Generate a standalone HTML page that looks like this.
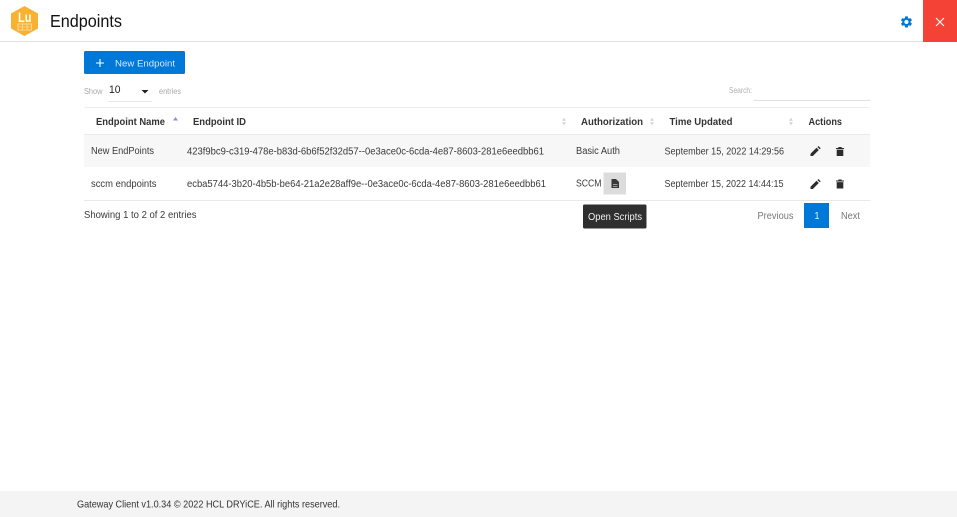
<!DOCTYPE html>
<html><head><meta charset="utf-8"><title>Endpoints</title>
<style>
html,body{margin:0;padding:0;background:#fff;width:957px;height:517px;overflow:hidden}
svg{display:block}
text{font-family:"Liberation Sans","DejaVu Sans",sans-serif;fill:#3a3a3a;font-size:10px}
.h{font-weight:bold;fill:#333}
</style></head><body>
<svg width="957" height="517" viewBox="0 0 957 517" xmlns="http://www.w3.org/2000/svg">
<rect width="957" height="517" fill="#fff"/>
<!-- header -->
<rect x="0" y="41" width="957" height="1" fill="#e2e2e2"/>
<polygon points="24.500,6 38,13.500 38,28.500 24.500,36 11,28.500 11,13.500" fill="#f8b133"/>
<text x="18" y="22" style="font-size:14px;font-weight:bold;fill:#fff" textLength="13.500" lengthAdjust="spacingAndGlyphs">Lu</text>
<rect x="18" y="24" width="13.500" height="6" fill="none" stroke="#fde3b0" stroke-width=".8"/>
<path d="M22.500 24v6M27 24v6M18 27h13.500" stroke="#fde3b0" stroke-width=".6" fill="none"/>
<text x="50" y="27" style="font-size:17.500px;fill:#111" textLength="72" lengthAdjust="spacingAndGlyphs">Endpoints</text>
<g transform="translate(899.500,15) scale(.58)"><path fill="#0078d7" d="M19.140 12.940c.04-.3.06-.61.06-.94 0-.32-.02-.64-.07-.94l2.030-1.580c.18-.14.23-.41.12-.61l-1.920-3.320c-.12-.22-.37-.29-.59-.22l-2.390.96c-.5-.38-1.030-.7-1.620-.94l-.36-2.540c-.04-.24-.24-.41-.48-.41h-3.840c-.24 0-.43.17-.47.41l-.36 2.540c-.59.24-1.130.57-1.620.94l-2.390-.96c-.22-.08-.47 0-.59.22L2.740 8.870c-.12.21-.08.47.12.61l2.030 1.580c-.05.3-.09.63-.09.94s.02.64.07.94l-2.030 1.580c-.18.14-.23.41-.12.61l1.920 3.320c.12.22.37.29.59.22l2.390-.96c.5.38 1.030.7 1.620.94l.36 2.540c.05.24.24.41.48.41h3.840c.24 0 .44-.17.47-.41l.36-2.540c.59-.24 1.130-.56 1.620-.94l2.390.96c.22.08.47 0 .59-.22l1.920-3.320c.12-.22.07-.47-.12-.61l-2.010-1.580zM12 15.600c-1.980 0-3.600-1.620-3.600-3.600s1.620-3.600 3.600-3.600 3.600 1.620 3.600 3.600-1.620 3.600-3.600 3.600z"/></g>
<rect x="923" y="0" width="34" height="42" fill="#f44336"/>
<path d="M936 18l8 8M944 18l-8 8" stroke="#fff" stroke-width="1.100" fill="none"/>
<!-- button -->
<rect x="84" y="51" width="101" height="23" rx="1.500" fill="#0078d7"/>
<path d="M100 59v8M96 63h8" stroke="#fff" stroke-width="1.100"/>
<text x="115" y="66.500" style="font-size:9.500px;fill:#d6eaff" textLength="60" lengthAdjust="spacingAndGlyphs">New Endpoint</text>
<!-- length -->
<text x="84" y="94" style="font-size:8px;fill:#a8a8a8" textLength="18.500" lengthAdjust="spacingAndGlyphs">Show</text>
<text x="109" y="93" style="font-size:11px;fill:#222" textLength="11.500" lengthAdjust="spacingAndGlyphs">10</text>
<path d="M141.500 90h7l-3.500 3.500z" fill="#222"/>
<rect x="108" y="101" width="44" height="1" fill="#e8e8e8"/>
<text x="159" y="94" style="font-size:8px;fill:#a8a8a8" textLength="22" lengthAdjust="spacingAndGlyphs">entries</text>
<text x="729" y="93" style="font-size:8px;fill:#b0b0b0" textLength="23" lengthAdjust="spacingAndGlyphs">Search:</text>
<rect x="754" y="100" width="116" height="1" fill="#e0e0e0"/>
<!-- table -->
<rect x="84" y="107" width="786" height="1" fill="#eee"/>
<rect x="84" y="134" width="786" height="1" fill="#eaeaea"/>
<rect x="84" y="135" width="786" height="32" fill="#f7f7f7"/>
<rect x="84" y="200" width="786" height="1" fill="#e8e8e8"/>
<text class="h" x="96" y="125" textLength="69" lengthAdjust="spacingAndGlyphs">Endpoint Name</text>
<text class="h" x="193" y="125" textLength="53" lengthAdjust="spacingAndGlyphs">Endpoint ID</text>
<text class="h" x="581" y="125" textLength="62" lengthAdjust="spacingAndGlyphs">Authorization</text>
<text class="h" x="669.500" y="125" textLength="63" lengthAdjust="spacingAndGlyphs">Time Updated</text>
<text class="h" x="808.500" y="125" textLength="33.500" lengthAdjust="spacingAndGlyphs">Actions</text>
<path d="M173 120.500l2.500-3.500 2.500 3.500z" fill="#8f8fe0"/>
<g fill="#d4d4d4"><path d="M562 120.800l2-3 2 3zM562 122.200l2 3 2-3z"/><path d="M650 120.800l2-3 2 3zM650 122.200l2 3 2-3z"/><path d="M789 120.800l2-3 2 3zM789 122.200l2 3 2-3z"/></g>
<text x="91" y="154" textLength="63" lengthAdjust="spacingAndGlyphs">New EndPoints</text>
<text x="187" y="154.500" textLength="357" lengthAdjust="spacingAndGlyphs">423f9bc9-c319-478e-b83d-6b6f52f32d57--0e3ace0c-6cda-4e87-8603-281e6eedbb61</text>
<text x="576" y="154" textLength="44" lengthAdjust="spacingAndGlyphs">Basic Auth</text>
<text x="664.500" y="154.500" textLength="119.500" lengthAdjust="spacingAndGlyphs">September 15, 2022 14:29:56</text>
<text x="91" y="187" textLength="65.500" lengthAdjust="spacingAndGlyphs">sccm endpoints</text>
<text x="187" y="187" textLength="359" lengthAdjust="spacingAndGlyphs">ecba5744-3b20-4b5b-be64-21a2e28aff9e--0e3ace0c-6cda-4e87-8603-281e6eedbb61</text>
<text x="576" y="186.500" textLength="25.500" lengthAdjust="spacingAndGlyphs">SCCM</text>
<text x="664.500" y="187" textLength="119" lengthAdjust="spacingAndGlyphs">September 15, 2022 14:44:15</text>
<!-- open scripts button -->
<rect x="603.500" y="172.500" width="22.500" height="22" fill="#dcdcdc"/>
<path d="M611.500 179h4.500l3 3v6h-7.500z" fill="#3a3a3a"/>
<path d="M613 184.300h4.500M613 186.300h4.500" stroke="#dcdcdc" stroke-width=".7"/>
<!-- icons -->
<path d="M810.500 156v-2.300l6-6 2.300 2.300-6 6z" fill="#2c2c2c"/><path d="M817.400 147l1-1 2.300 2.300-1 1z" fill="#2c2c2c"/>
<path d="M810.500 189v-2.300l6-6 2.300 2.300-6 6z" fill="#2c2c2c"/><path d="M817.400 180l1-1 2.300 2.300-1 1z" fill="#2c2c2c"/>
<path d="M836 148h8v1h-8zM838.300 147h3.400v1.200h-3.400zM836.700 149.600h6.600v6.400h-6.600z" fill="#2c2c2c"/>
<path d="M836 180.500h8v1h-8zM838.300 179.500h3.400v1.200h-3.400zM836.700 182.100h6.600v6.400h-6.600z" fill="#2c2c2c"/>
<!-- info -->
<text x="84" y="218" textLength="112.500" lengthAdjust="spacingAndGlyphs">Showing 1 to 2 of 2 entries</text>
<rect x="583" y="204.500" width="63.500" height="24" rx="1.500" fill="#2f2f2f"/>
<text x="588" y="220" style="fill:#f2f2f2" textLength="54" lengthAdjust="spacingAndGlyphs">Open Scripts</text>
<text x="757.500" y="219" style="fill:#777" textLength="36" lengthAdjust="spacingAndGlyphs">Previous</text>
<rect x="804" y="203" width="25" height="25" fill="#0078d7"/>
<text x="814.500" y="219" style="fill:#e8f3ff" textLength="5" lengthAdjust="spacingAndGlyphs">1</text>
<text x="841" y="219" style="fill:#777" textLength="19" lengthAdjust="spacingAndGlyphs">Next</text>
<!-- footer -->
<rect x="0" y="491" width="957" height="26" fill="#f4f4f4"/>
<text x="77" y="507.500" style="font-size:10.500px;fill:#333" textLength="263" lengthAdjust="spacingAndGlyphs">Gateway Client v1.0.34 © 2022 HCL DRYiCE. All rights reserved.</text>
</svg>
</body></html>
